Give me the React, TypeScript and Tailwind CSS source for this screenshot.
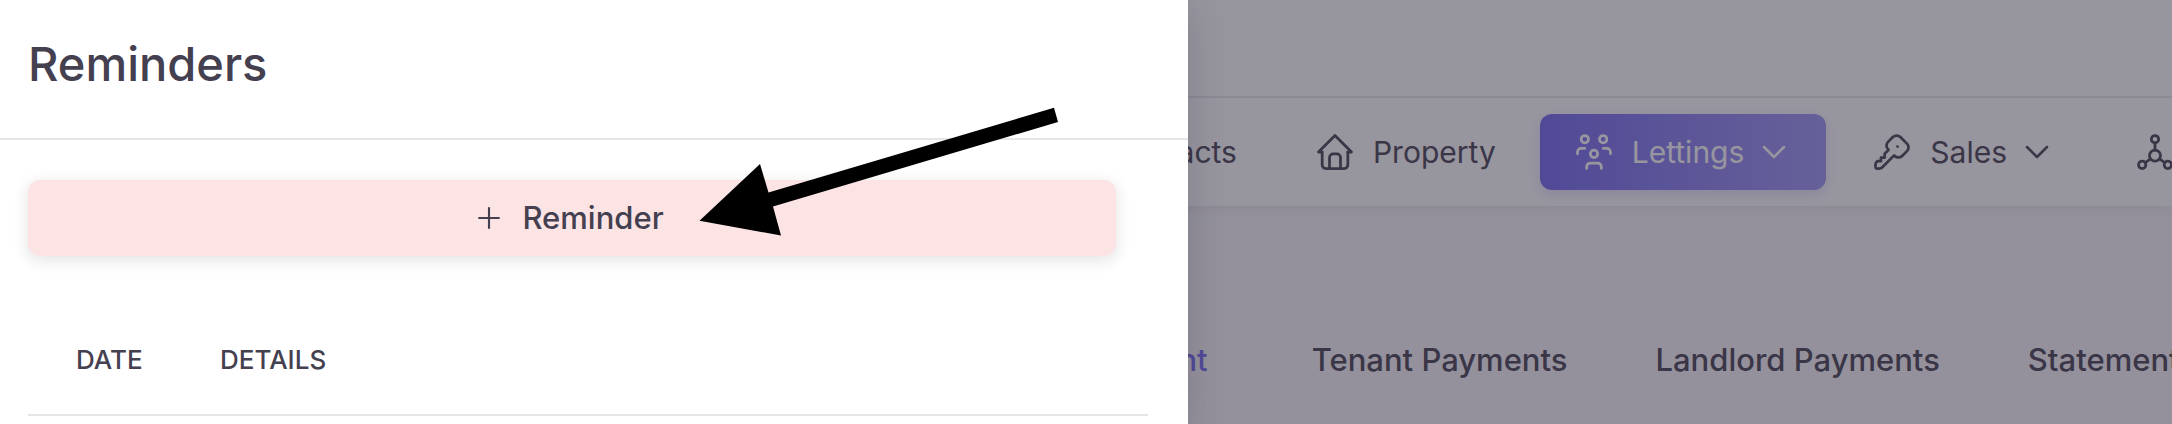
import type { ReactNode } from "react";
import {
  TbChevronDown,
  TbHome,
  TbKey,
  TbPlus,
  TbSocial,
  TbUser,
  TbUsersGroup,
} from "react-icons/tb";

const TABS = ["Tenant Payments", "Landlord Payments", "Statements"];

export default function App() {
  return (
    <div className="relative min-h-screen overflow-hidden bg-[#f8f7fa] font-['Inter',sans-serif] text-[#444050]">
      <header className="bg-white shadow-[0_4px_12px_rgba(47,43,61,0.08)]">
        <div className="h-24" />
        <nav className="flex gap-3 border-t-2 border-[#e6e6e8] py-4 pl-[1018px]">
          <NavItem icon={<TbUser size={44} strokeWidth={1.5} />} label="Contacts" />
          <NavItem icon={<TbHome size={44} strokeWidth={1.5} />} label="Property" />
          <NavItem
            icon={<TbUsersGroup size={44} strokeWidth={1.5} />}
            label="Lettings"
            active
            menu
          />
          <NavItem icon={<TbKey size={44} strokeWidth={1.5} />} label="Sales" menu />
          <NavItem icon={<TbSocial size={44} strokeWidth={1.5} />} />
        </nav>
      </header>

      <nav className="mt-[134px] flex gap-[88px] pl-[1078px] text-[31px] leading-[40px] font-medium whitespace-nowrap">
        <a href="#" className="mr-4 text-[#7367f0]">
          Payment
        </a>
        {TABS.map((tab) => (
          <a key={tab} href="#">
            {tab}
          </a>
        ))}
      </nav>

      {/* backdrop */}
      <div className="absolute inset-0 bg-[#2f2b3d]/50" />

      <Drawer />
    </div>
  );
}

function NavItem({
  icon,
  label,
  active,
  menu,
}: {
  icon: ReactNode;
  label?: string;
  active?: boolean;
  menu?: boolean;
}) {
  return (
    <a
      href="#"
      className={`flex h-[76px] shrink-0 items-center rounded-xl px-8 ${
        active
          ? "bg-linear-to-r from-[#7367f0] to-[#9d95f5] text-white shadow-[0_4px_12px_rgba(115,103,240,0.2)]"
          : ""
      }`}
    >
      {icon}
      {label && <span className="ml-4 text-[30px] leading-[44px]">{label}</span>}
      {menu && <TbChevronDown strokeWidth={1.5} className="ml-[10px] size-10" />}
    </a>
  );
}

function Drawer() {
  return (
    <aside className="absolute inset-y-0 left-0 w-[54.7%] bg-white shadow-[0_8px_36px_rgba(47,43,61,0.2)]">
      <div className="border-b-2 border-[#e6e6e8] px-7 pt-[30px] pb-10">
        <h2 className="text-[47px] leading-[68px] font-medium">Reminders</h2>
      </div>

      <div className="pt-10 pr-10 pl-7">
        <div className="pr-8">
          <button
            type="button"
            className="flex h-[76px] w-full items-center justify-center gap-4 rounded-xl bg-[#fce4e4] pr-2 text-[31px] font-medium shadow-[0_4px_16px_rgba(47,43,61,0.14)]"
          >
            <TbPlus size={34} strokeWidth={1.5} />
            Reminder
          </button>
        </div>

        <table className="mt-12 w-full border-b-2 border-[#e6e6e8] text-left text-[26px]">
          <thead>
            <tr className="h-[111px]">
              <th className="w-[144px] pl-12 font-medium">DATE</th>
              <th className="pl-12 font-medium">DETAILS</th>
            </tr>
          </thead>
        </table>
      </div>

      <Arrow />
    </aside>
  );
}

function Arrow() {
  return (
    <svg
      viewBox="0 0 360 130"
      aria-hidden="true"
      className="pointer-events-none absolute top-[107px] left-[699px] h-[130px] w-[360px]"
    >
      <path d="M0.5 113.7 61 57 69.5 85.5 355 0.7 359 15 74 99.5 82 128.5Z" />
    </svg>
  );
}
